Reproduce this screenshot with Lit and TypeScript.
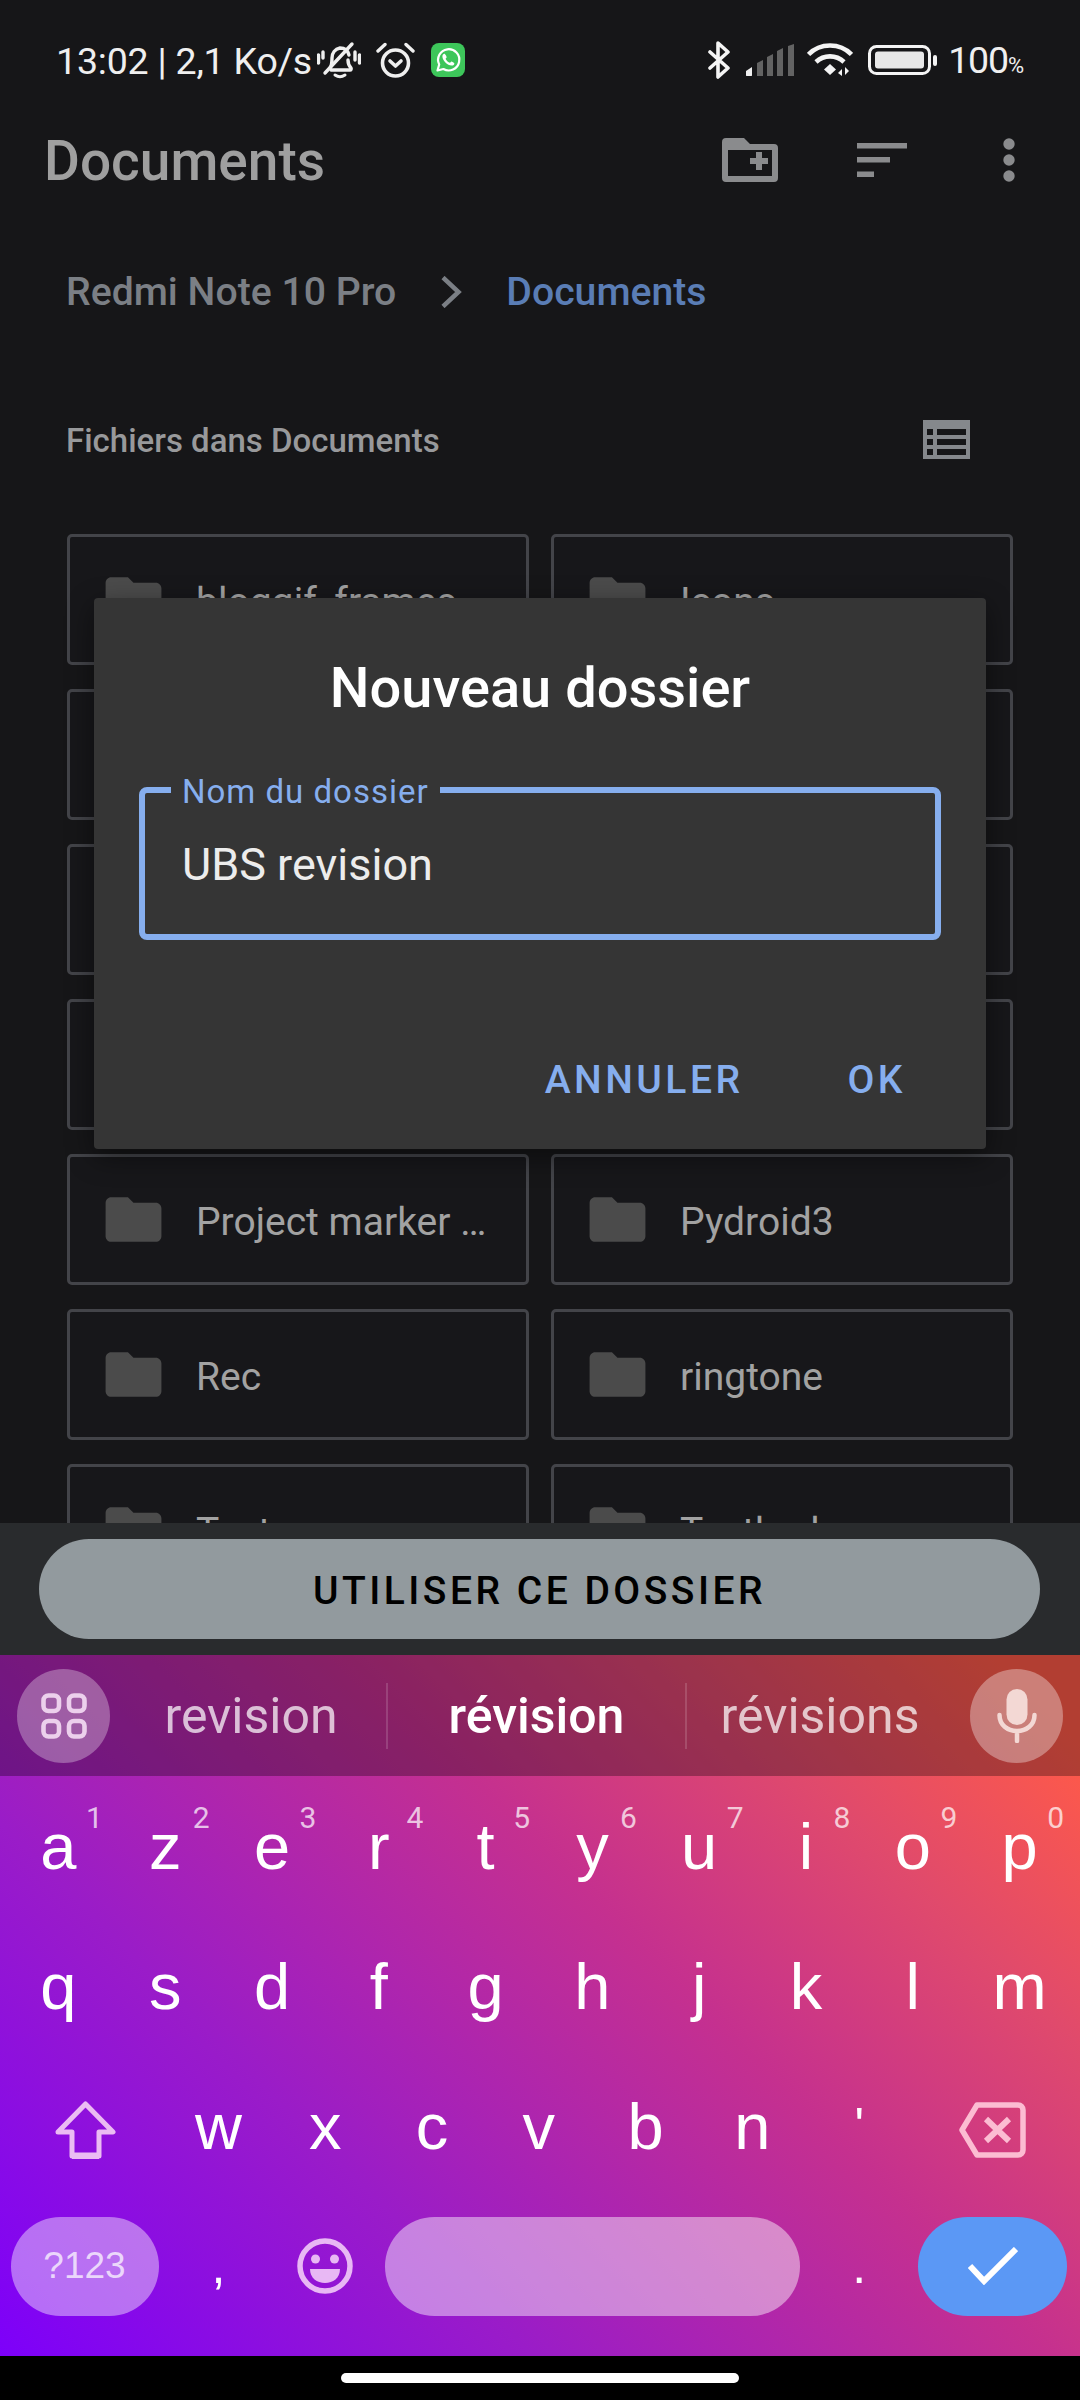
import { LitElement, html, css } from "lit";
import { customElement } from "lit/decorators.js";

const folder = html`<svg class="folder" viewBox="0 0 24 24"><path d="M10 4H4c-1.1 0-1.99.9-1.99 2L2 18c0 1.1.9 2 2 2h16c1.1 0 2-.9 2-2V8c0-1.1-.9-2-2-2h-8l-2-2z"/></svg>`;

const cells = ["blogqif_frames", "Icons", "", "", "", "", "", "", "Project marker …", "Pydroid3", "Rec", "ringtone", "Test", "Testbed"];
const row1 = [["a","1"],["z","2"],["e","3"],["r","4"],["t","5"],["y","6"],["u","7"],["i","8"],["o","9"],["p","0"]];
const row2 = ["q","s","d","f","g","h","j","k","l","m"];
const row3 = ["w","x","c","v","b","n"];

@customElement("app-root")
export class AppRoot extends LitElement {
  static styles = css`
    :host { display: block; width: 1080px; height: 2400px; font-family: Roboto, "Noto Sans", sans-serif; }
    * { box-sizing: border-box; }
    .page { position: relative; width: 1080px; height: 2400px; display: flex; flex-direction: column; background: #161618; overflow: hidden; }
    .main { height: 1523px; overflow: hidden; flex: none; }
    .status { height: 105px; display: flex; align-items: center; padding: 15px 56px 0 56px; color: #efefef; }
    .status svg { flex: none; display: block; }
    .stext { font-size: 37.5px; line-height: 1; white-space: nowrap; padding-top: 4px; letter-spacing: -0.2px; }
    .bell { margin-left: 5px; }
    .alarm { margin-left: 15px; }
    .wa { margin-left: 16px; }
    .bt { margin-left: auto; }
    .sig { margin-left: 14px; }
    .wifi { margin-left: 13px; }
    .bat { margin-left: 15px; }
    .pct { margin-left: 11px; font-size: 37.5px; line-height: 1; display: flex; align-items: baseline; letter-spacing: -1.2px; padding-top: 2px; }
    .pct span { font-size: 22px; letter-spacing: 0; }
    .appbar { height: 110px; display: flex; align-items: center; padding: 0 65px 0 44px; }
    .appbar h1 { margin: 0; font-size: 55px; font-weight: 500; color: #9f9f9f; flex: 1; line-height: 1; padding-top: 2px; }
    .appbar svg { display: block; flex: none; }
    .sort { margin-left: 79px; }
    .dots { margin-left: 96px; }
    .crumbs { margin-top: 32px; height: 90px; display: flex; align-items: center; padding-left: 66px; font-size: 39.2px; font-weight: 500; color: #7b7f85; }
    .crumbs svg { margin: 0 44px; display: block; flex: none; }
    .crumbs .cur { color: #5a7db5; }
    .head { margin-top: 58px; height: 90px; display: flex; align-items: center; justify-content: space-between; padding: 0 110px 0 66px; font-size: 33px; font-weight: 500; color: #98999b; }
    .head svg { display: block; margin-top: -2px; }
    .grid { margin-top: 49px; padding: 0 67px; display: grid; grid-template-columns: 462px 462px; column-gap: 22px; row-gap: 24px; grid-auto-rows: 131px; }
    .cell { border: 3px solid #434449; border-radius: 5px; display: flex; align-items: center; padding-left: 30px; gap: 29px; font-size: 39px; color: #a2a2a2; white-space: nowrap; background: #17171a; }
    .cell span { padding-top: 4px; }
    .folder { width: 67px; height: 67px; flex: none; fill: #4b4b4b; display: block; }
    .footer { flex: none; height: 132px; background: #292b2d; padding: 16px 40px 0 39px; }
    .use { height: 100px; border-radius: 50px; background: #929a9e; color: #000; display: flex; align-items: center; justify-content: center; padding-top: 3px; font-size: 39px; font-weight: 500; letter-spacing: 3.5px; }
    .kb { flex: none; height: 701px; background: linear-gradient(45deg, #7d00fa 0%, #9a1cc8 30%, #c5308f 59%, #e04a6c 78%, #ff5a48 95%); color: #fff; }
    .strip { height: 121px; background: rgba(0,0,0,.3); display: grid; grid-template-columns: 99px 272px 299px 266px 110px; padding-left: 17px; align-items: center; }
    .round { width: 93px; height: 94px; border-radius: 50%; background: rgba(255,255,255,.3); display: flex; align-items: center; justify-content: center; }
    .round.mic { margin-left: 17px; background: rgba(255,255,255,.34); }
    .sug { height: 66px; display: flex; align-items: center; justify-content: center; font-size: 50px; color: rgba(255,255,255,.72); }
    .sug.bar { border-right: 2px solid rgba(255,255,255,.15); }
    .sug.bold { color: #fff; font-weight: 500; }
    .keys { padding: 0 7px 0 5px; }
    .row { height: 140px; display: flex; }
    .key { position: relative; width: 106.8px; flex: none; display: flex; align-items: center; justify-content: center; font-family: "Liberation Sans", Arial, sans-serif; font-size: 65px; line-height: 1; }
    .key.sm { font-size: 50px; }
    .key sup { position: absolute; top: 27px; left: 81px; font-family: Roboto, sans-serif; font-size: 30px; line-height: 1; color: rgba(255,255,255,.72); }
    .side { width: 160px; flex: none; display: flex; align-items: center; justify-content: center; }
    .side svg, .key svg { display: block; }
    .side .low { margin-top: 8px; }
    .pill { height: 99px; border-radius: 50px; display: flex; align-items: center; justify-content: center; }
    .sym { width: 148px; margin-left: -1px; background: rgba(255,255,255,.42); color: rgba(255,255,255,.72); font-family: "Liberation Sans", Arial, sans-serif; font-size: 37px; }
    .spacewrap { width: 427.2px; flex: none; display: flex; align-items: center; justify-content: center; }
    .space { width: 415px; background: rgba(255,255,255,.45); }
    .ok { width: 149px; background: #5b98f5; }
    .nav { flex: 1; background: #000; display: flex; justify-content: center; padding-top: 17px; }
    .nav div { width: 398px; height: 10px; border-radius: 5px; background: #fff; }
    .scrim { position: absolute; left: 94px; top: 598px; width: 892px; height: 551px; background: #353535; border-radius: 4px; box-shadow: 0 8px 28px rgba(0,0,0,.45); display: flex; flex-direction: column; }
    .scrim h2 { margin: 0; padding-top: 60px; height: 129px; line-height: 60px; text-align: center; font-size: 56px; font-weight: 500; color: #fff; }
    .field { position: relative; margin: 60px 45px 0 45px; height: 153px; border: 6px solid #86aeee; border-radius: 8px; padding: 2px 0 0 37px; display: flex; align-items: center; font-size: 45px; color: #ececec; }
    .field label { position: absolute; left: 26px; top: -21px; padding: 0 11px; background: #353535; line-height: 40px; font-size: 33px; letter-spacing: 1px; color: #86aeee; }
    .actions { margin-top: auto; height: 92px; display: flex; justify-content: flex-end; gap: 104px; padding: 0 80px 0 0; font-size: 39px; font-weight: 500; letter-spacing: 3.5px; color: #86aeee; }
    .actions span { display: block; }
  `;

  render() {
    return html`<div class="page">
      <div class="main">
        <div class="status">
          <span class="stext">13:02 | 2,1 Ko/s</span>
          <svg class="bell" width="44" height="38" viewBox="0 0 44 38" fill="none" stroke="#efefef" stroke-width="3.4" stroke-linecap="round" stroke-linejoin="round">
            <path d="M13 27c2-3 2-6 2-10 0-5 3-9 8-10 5 0 8 3 9 7M31 19c0 3 1 6 3 8 .5 1 0 2-1 2H14"/>
            <path d="M18 34c3 2 7 2 10 0" stroke-width="3"/>
            <path d="M8 32 35 3"/>
            <path d="M1.5 14v8M6 11v6M38 11v8M42.5 14v8"/>
          </svg>
          <svg class="alarm" width="39" height="36" viewBox="0 0 39 36" fill="none" stroke="#efefef" stroke-linecap="round" stroke-linejoin="round">
            <circle cx="19.5" cy="21" r="13" stroke-width="3.6"/>
            <path d="M14 19l5.5 5 5.5-5" stroke-width="3.6"/>
            <path d="M2 9 9 2.5M37 9 30 2.5" stroke-width="3.4"/>
          </svg>
          <svg class="wa" width="34" height="34" viewBox="0 0 34 34">
            <rect width="34" height="34" rx="8" fill="#3dc65a"/>
            <path d="M6.5 27.5l1.7-6A10.6 10.6 0 1 1 12.4 26z" fill="none" stroke="#fff" stroke-width="2.2" stroke-linejoin="round"/>
            <path d="M13.4 10.8c-.9 0-2 1-2 2.8 0 4 5 9 9.200 9 1.800 0 2.800-1.100 2.800-2.100 0-.6-2.400-2-3-2-.5 0-1 1.300-1.500 1.300-1.300 0-4.200-2.900-4.200-4 0-.6 1-1 1-1.500 0-.7-1.500-3.500-2.300-3.500z" fill="#fff"/>
          </svg>
          <svg class="bt" width="25" height="38" viewBox="0 0 25 38" fill="none" stroke="#f4f4f4" stroke-width="3.6" stroke-linecap="round" stroke-linejoin="round">
            <path d="M3 11 21 27 11 36V2l10 9L3 27"/>
          </svg>
          <svg class="sig" width="48" height="32" viewBox="0 0 48 32">
            <path d="M0 31v-4l6-4v8c0 .5 0 1-1 1H1c-1 0-1-.5-1-1z" fill="#efefef"/>
            <path d="M11 32V19l6-3v16zM21 32V13l6-3v22zM31 32V7l6-3v28zM42 32V2l6-2v32z" fill="#636363"/>
          </svg>
          <svg class="wifi" width="46" height="34" viewBox="0 0 46 34" fill="none" stroke="#f4f4f4">
            <path d="M1.500 11.500C13 -.5 33-.5 44.500 11.500" stroke-width="4.600"/>
            <path d="M9 19c8-7.500 20-7.500 28 0" stroke-width="4.600"/>
            <path d="M23 21l6 5.500-6 5.500-6-5.500z" fill="#f4f4f4" stroke="none"/>
            <path d="M35 33V26l-4 4zM38 24v8l4-4z" fill="#f4f4f4" stroke="none"/>
          </svg>
          <svg class="bat" width="69" height="30" viewBox="0 0 69 30">
            <rect x="1.500" y="1.500" width="60" height="27" rx="7" fill="none" stroke="#f4f4f4" stroke-width="3"/>
            <rect x="7" y="6.500" width="49" height="17" rx="3" fill="#e8e8e8"/>
            <rect x="65" y="10" width="4" height="11" rx="2" fill="#f4f4f4"/>
          </svg>
          <span class="pct">100<span>%</span></span>
        </div>
        <div class="appbar">
          <h1>Documents</h1>
          <svg width="56" height="44" viewBox="0 0 56 44" fill="#8a8b8d">
            <path fill-rule="evenodd" d="M4 0h18l6 6h24a4 4 0 0 1 4 4v30a4 4 0 0 1-4 4H4a4 4 0 0 1-4-4V4a4 4 0 0 1 4-4zM6 12v26h44V12z"/>
            <path d="M34 14h6v6h6v6h-6v6h-6v-6h-6v-6h6z"/>
          </svg>
          <svg class="sort" width="50" height="34" viewBox="0 0 50 34" fill="#8a8b8d">
            <rect width="50" height="5.500"/><rect y="14" width="33" height="5.500"/><rect y="28.500" width="17" height="5.500"/>
          </svg>
          <svg class="dots" width="12" height="44" viewBox="0 0 12 44" fill="#8a8b8d">
            <circle cx="6" cy="6" r="5.700"/><circle cx="6" cy="22" r="5.700"/><circle cx="6" cy="38" r="5.700"/>
          </svg>
        </div>
        <div class="crumbs">
          <span>Redmi Note 10 Pro</span>
          <svg width="22" height="32" viewBox="0 0 22 32" fill="none" stroke="#7b7f85" stroke-width="4.500"><path d="M3 1.500 18.500 16 3 30.500"/></svg>
          <span class="cur">Documents</span>
        </div>
        <div class="head">
          <span>Fichiers dans Documents</span>
          <svg width="47" height="39" viewBox="0 0 47 39" fill="#85888c">
            <path fill-rule="evenodd" d="M0 0h47v39H0zM4 9v6h6V9zM14 9v6h29V9zM4 19v6h6v-6zM14 19v6h29v-6zM4 29v6h6v-6zM14 29v6h29v-6z"/>
          </svg>
        </div>
        <div class="grid">
          ${cells.map((c) => html`<div class="cell">${folder}<span>${c}</span></div>`)}
        </div>
      </div>
      <div class="footer"><div class="use">UTILISER CE DOSSIER</div></div>
      <div class="kb">
        <div class="strip">
          <div class="round">
            <svg width="46" height="46" viewBox="0 0 46 46" fill="none" stroke="#ecd0ec" stroke-width="4.600">
              <rect x="2.500" y="2.500" width="15.500" height="15.500" rx="5"/><rect x="28" y="2.500" width="15.500" height="15.500" rx="5"/>
              <rect x="2.500" y="28" width="15.500" height="15.500" rx="5"/><rect x="28" y="28" width="15.500" height="15.500" rx="5"/>
            </svg>
          </div>
          <div class="sug bar">revision</div>
          <div class="sug bar bold">révision</div>
          <div class="sug">révisions</div>
          <div class="round mic">
            <svg width="40" height="54" viewBox="0 0 40 54" fill="none" stroke="#f3d8d4" stroke-width="4.500" stroke-linecap="round">
              <rect x="9.500" y="0" width="21" height="36" rx="10.500" fill="#f3d8d4" stroke="none"/>
              <path d="M2.500 26c0 10 8 16 17.500 16s17.500-6 17.500-16M20 42v10"/>
            </svg>
          </div>
        </div>
        <div class="keys">
          <div class="row">${row1.map(([k, d]) => html`<div class="key">${k}<sup>${d}</sup></div>`)}</div>
          <div class="row">${row2.map((k) => html`<div class="key">${k}</div>`)}</div>
          <div class="row">
            <div class="side">
              <svg class="low" width="61" height="58" viewBox="0 0 61 58" fill="none" stroke="#ebbcf3" stroke-width="5" stroke-linejoin="round">
                <path d="M30.500 3 58 31H44V55H17V31H3z"/>
                <path d="M17 55H44" stroke-width="7"/>
              </svg>
            </div>
            ${row3.map((k) => html`<div class="key">${k}</div>`)}
            <div class="key sm">'</div>
            <div class="side">
              <svg class="low" width="67" height="56" viewBox="0 0 67 56" fill="none" stroke="#fcbcd2" stroke-width="5.500" stroke-linejoin="round">
                <path d="M18 3h41c3 0 5 2 5 5v40c0 3-2 5-5 5H18L3 28z"/>
                <path d="M27 17l23 22M50 17 27 39" stroke-width="6"/>
              </svg>
            </div>
          </div>
          <div class="row">
            <div class="side"><div class="pill sym">?123</div></div>
            <div class="key sm">,</div>
            <div class="key">
              <svg width="56" height="56" viewBox="0 0 56 56">
                <circle cx="28" cy="28" r="25" fill="none" stroke="#e8b8f4" stroke-width="5.500"/>
                <circle cx="18.500" cy="21" r="4.500" fill="#e8b8f4"/><circle cx="37.500" cy="21" r="4.500" fill="#e8b8f4"/>
                <path d="M13 31h30c0 9-7 14-15 14s-15-5-15-14z" fill="#e8b8f4"/>
              </svg>
            </div>
            <div class="spacewrap"><div class="pill space"></div></div>
            <div class="key sm">.</div>
            <div class="side">
              <div class="pill ok">
                <svg width="50" height="38" viewBox="0 0 50 38" fill="none" stroke="#fff" stroke-width="6"><path d="M2 19 16 34 48 2"/></svg>
              </div>
            </div>
          </div>
        </div>
      </div>
      <div class="nav"><div></div></div>
      <div class="scrim">
        <h2>Nouveau dossier</h2>
        <div class="field"><label>Nom du dossier</label>UBS revision</div>
        <div class="actions"><span>ANNULER</span><span>OK</span></div>
      </div>
    </div>`;
  }
}
